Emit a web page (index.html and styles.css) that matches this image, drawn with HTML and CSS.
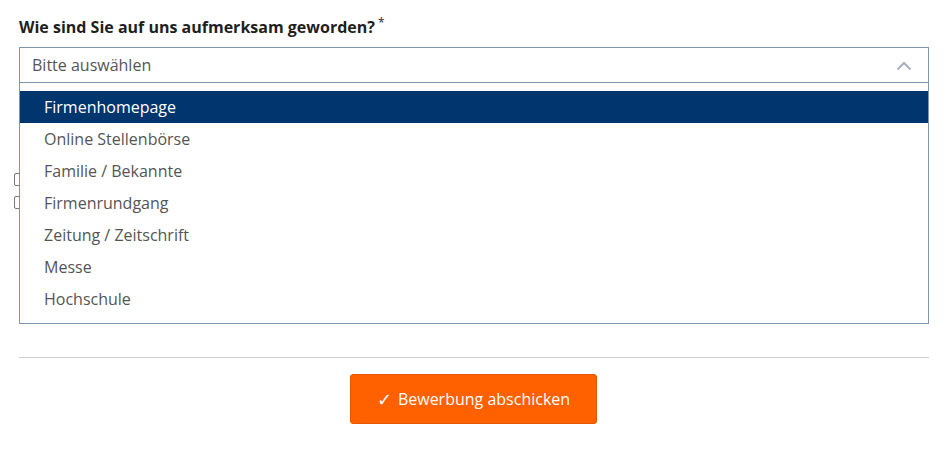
FILE: index.html
```html
<!DOCTYPE html>
<html lang="de">
<head>
<meta charset="utf-8">
<link rel="stylesheet" href="styles.css">
</head>
<body>
<div class="page">
  <div class="field">
    <div class="label">Wie sind Sie auf uns aufmerksam geworden?<sup class="req">*</sup></div>
    <div class="select-wrap">
      <div class="select">
        <span class="placeholder">Bitte auswählen</span>
        <svg class="chev" width="16" height="10" viewBox="0 0 16 10"><path d="M1.5 8.5 L8 2 L14.5 8.5" fill="none" stroke="#a9b0b8" stroke-width="2"/></svg>
      </div>
      <ul class="list">
        <li class="active">Firmenhomepage</li>
        <li>Online Stellenbörse</li>
        <li>Familie / Bekannte</li>
        <li>Firmenrundgang</li>
        <li>Zeitung / Zeitschrift</li>
        <li>Messe</li>
        <li>Hochschule</li>
      </ul>
    </div>
  </div>
  <div class="checks">
    <label class="check"><span class="box"></span></label>
    <label class="check"><span class="box"></span></label>
  </div>
  <hr class="sep">
  <div class="actions">
    <button class="submit"><span class="tick">✓</span>Bewerbung abschicken</button>
  </div>
</div>
</body>
</html>
```
FILE: styles.css
```css
html, body { margin: 0; padding: 0; background: #fff; }
body { font-family: "Open Sans", sans-serif; color: #222; }
.page { width: 910px; margin-left: 19px; padding-top: 16px; }
.label { font-weight: 700; font-size: 16px; line-height: 22px; color: #1f1f1f; }
.req { font-weight: 400; font-size: 12px; line-height: 12px; vertical-align: top; position: relative; top: 1px; margin-left: 3px; }
.select-wrap { position: relative; margin-top: 9px; }
.select { height: 34px; border: 1px solid #7d97b3; display: flex; align-items: center; justify-content: space-between; padding: 0 16px 0 12px; }
.placeholder { font-size: 16px; color: #555; }
.chev { margin-top: 1px; }
.list { position: absolute; left: 0; right: 0; top: 100%; margin: 0; padding: 8px 0; list-style: none; background: #fff; border: 1px solid #7d97b3; border-top: none; z-index: 2; }
.list li { height: 32px; line-height: 32px; padding-left: 24px; font-size: 16px; color: #555; }
.list li.active { background: #00356e; color: #fff; }
.checks { padding-top: 90px; margin-left: -5px; display: flex; flex-direction: column; gap: 10px; }
.check { display: block; height: 13px; }
.box { display: block; width: 11px; height: 11px; border: 1px solid #767676; border-radius: 2px; }
.sep { border: none; border-top: 1px solid #cfcfcf; margin: 148px 0 0; }
.actions { display: flex; justify-content: center; padding-top: 16px; margin-left: -19px; margin-right: -18px; }
.submit { background: #ff6000; border: 1px solid #e65700; border-radius: 3px; color: #fff; font-family: "Open Sans", sans-serif; font-size: 16px; width: 247px; height: 50px; display: flex; align-items: center; justify-content: center; gap: 6px; cursor: pointer; }
.tick { font-size: 18px; }
```
